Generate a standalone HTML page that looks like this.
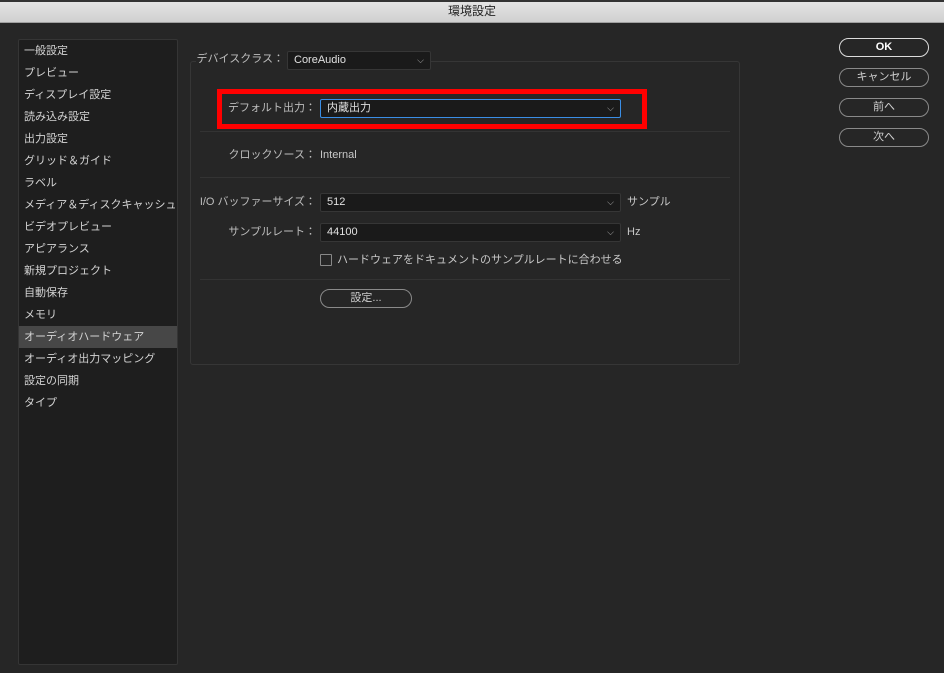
<!DOCTYPE html>
<html><head><meta charset="utf-8"><style>
*{margin:0;padding:0;box-sizing:border-box}
body{width:944px;height:673px;background:#262626;font-family:"Liberation Sans","Noto Sans CJK JP",sans-serif;font-size:11px;color:#c8c8c8;position:relative;overflow:hidden}
.a{position:absolute}
.title{left:0;top:0;width:944px;height:23px;background:linear-gradient(#e4e4e4,#d0d0d0);border-top:2px solid #333;border-bottom:1px solid #a0a0a0;text-align:center;color:#222;font-size:12px;line-height:19px}
.side{left:18px;top:39px;width:160px;height:626px;background:#1e1e1e;border:1px solid #353535;border-radius:2px}
.side div{height:22px;line-height:22px;padding-left:5px;color:#d4d4d4;font-size:11px}
.side .sel{background:#474747}
.grp{left:190px;top:61px;width:550px;height:304px;border:1px solid #363636;border-radius:3px}
.sel2{background:#1a1a1a;border:1px solid #363636;border-radius:2px;height:19px;line-height:17px;padding-left:6px;color:#e0e0e0}
.chev{position:absolute;right:6px;top:0;font-size:9px;color:#aaa}
.lbl{text-align:right;color:#bdbdbd;line-height:19px}
.line{left:200px;width:530px;height:1px;background:#333}
.btn{border:1.5px solid #8a8a8a;border-radius:10px;height:19px;line-height:16px;text-align:center;color:#cfcfcf}
</style></head><body>
<div class="a title">環境設定</div>
<div class="a side">
<div>一般設定</div><div>プレビュー</div><div>ディスプレイ設定</div><div>読み込み設定</div><div>出力設定</div><div>グリッド＆ガイド</div><div>ラベル</div><div>メディア＆ディスクキャッシュ</div><div>ビデオプレビュー</div><div>アピアランス</div><div>新規プロジェクト</div><div>自動保存</div><div>メモリ</div><div class="sel">オーディオハードウェア</div><div>オーディオ出力マッピング</div><div>設定の同期</div><div>タイプ</div>
</div>
<div class="a grp"></div>
<div class="a" style="left:196px;top:50px;width:92px;height:20px;background:#262626"></div>
<div class="a lbl" style="left:196px;top:50px;width:88px">デバイスクラス：</div>
<div class="a sel2" style="left:287px;top:51px;width:144px">CoreAudio<span class="chev">⌵</span></div>
<div class="a" style="left:217px;top:89px;width:430px;height:40px;border:5px solid #f00"></div>
<div class="a lbl" style="left:222px;top:99px;width:94px">デフォルト出力：</div>
<div class="a sel2" style="left:320px;top:99px;width:301px;border-color:#3a8ee6">内蔵出力<span class="chev">⌵</span></div>
<div class="a line" style="top:131px"></div>
<div class="a lbl" style="left:200px;top:146px;width:116px">クロックソース：</div>
<div class="a" style="left:320px;top:146px;line-height:19px">Internal</div>
<div class="a line" style="top:177px"></div>
<div class="a lbl" style="left:196px;top:193px;width:120px">I/O バッファーサイズ：</div>
<div class="a sel2" style="left:320px;top:193px;width:301px">512<span class="chev">⌵</span></div>
<div class="a" style="left:627px;top:193px;line-height:19px">サンプル</div>
<div class="a lbl" style="left:200px;top:223px;width:116px">サンプルレート：</div>
<div class="a sel2" style="left:320px;top:223px;width:301px">44100<span class="chev">⌵</span></div>
<div class="a" style="left:627px;top:223px;line-height:19px">Hz</div>
<div class="a" style="left:320px;top:254px;width:12px;height:12px;border:1.5px solid #888;border-radius:1px"></div>
<div class="a" style="left:337px;top:251px;line-height:19px">ハードウェアをドキュメントのサンプルレートに合わせる</div>
<div class="a line" style="top:279px"></div>
<div class="a btn" style="left:320px;top:289px;width:92px">設定...</div>
<div class="a btn" style="left:839px;top:38px;width:90px;border-color:#ddd;color:#fff;font-weight:bold">OK</div>
<div class="a btn" style="left:839px;top:68px;width:90px">キャンセル</div>
<div class="a btn" style="left:839px;top:98px;width:90px">前へ</div>
<div class="a btn" style="left:839px;top:128px;width:90px">次へ</div>
</body></html>
